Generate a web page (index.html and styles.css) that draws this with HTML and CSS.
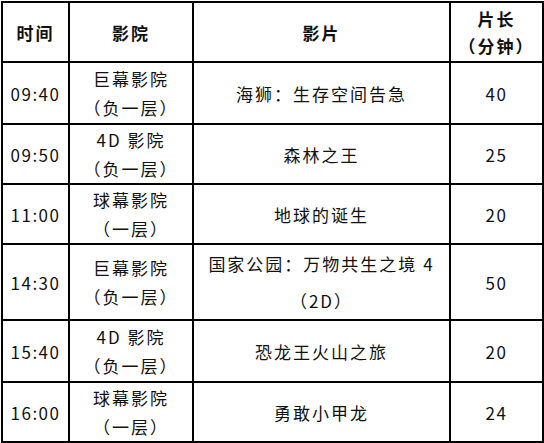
FILE: index.html
```html
<!DOCTYPE html>
<html lang="zh">
<head>
<meta charset="utf-8">
<link rel="stylesheet" href="styles.css">
</head>
<body>
<table class="schedule">
  <colgroup>
    <col class="c-time">
    <col class="c-hall">
    <col class="c-film">
    <col class="c-len">
  </colgroup>
  <thead>
    <tr class="r-head">
      <th>时间</th>
      <th>影院</th>
      <th>影片</th>
      <th class="two">片长<br>（分钟）</th>
    </tr>
  </thead>
  <tbody>
    <tr class="r-a">
      <td class="num">09:40</td>
      <td class="two">巨幕影院<br>（负一层）</td>
      <td>海狮：生存空间告急</td>
      <td class="num">40</td>
    </tr>
    <tr class="r-b">
      <td class="num">09:50</td>
      <td class="two">4D 影院<br>（负一层）</td>
      <td>森林之王</td>
      <td class="num">25</td>
    </tr>
    <tr class="r-b">
      <td class="num">11:00</td>
      <td class="two">球幕影院<br>（一层）</td>
      <td>地球的诞生</td>
      <td class="num">20</td>
    </tr>
    <tr class="r-tall">
      <td class="num">14:30</td>
      <td class="two">巨幕影院<br>（负一层）</td>
      <td class="wide">国家公园：万物共生之境 4<br>（2D）</td>
      <td class="num">50</td>
    </tr>
    <tr class="r-a">
      <td class="num">15:40</td>
      <td class="two">4D 影院<br>（负一层）</td>
      <td>恐龙王火山之旅</td>
      <td class="num">20</td>
    </tr>
    <tr class="r-last">
      <td class="num">16:00</td>
      <td class="two">球幕影院<br>（一层）</td>
      <td>勇敢小甲龙</td>
      <td class="num">24</td>
    </tr>
  </tbody>
</table>
</body>
</html>
```
FILE: styles.css
```css
html, body {
  margin: 0;
  padding: 0;
  background: #fff;
}
body {
  padding: 1px 0 0 1px;
  font-family: "Noto Sans CJK SC", "Noto Sans", sans-serif;
  color: #111;
}
.schedule {
  border-collapse: collapse;
  table-layout: fixed;
  width: 541px;
}
.c-time { width: 67px; }
.c-hall { width: 124px; }
.c-film { width: 257px; }
.c-len { width: 93px; }
.schedule th,
.schedule td {
  border: 2px solid #000;
  padding: 0;
  text-align: center;
  vertical-align: middle;
  font-size: 17px;
  letter-spacing: 2px;
  line-height: 29px;
  font-weight: 400;
}
.schedule th {
  font-weight: 700;
  font-size: 17px;
  letter-spacing: 2px;
}
.schedule th.two { line-height: 27px; }
.schedule td.num { letter-spacing: 1.5px; }
.schedule td.wide { line-height: 37px; }
.r-head { height: 60px; }
.r-a { height: 62px; }
.r-b { height: 60px; }
.r-tall { height: 76px; }
.r-last { height: 59px; }
```
